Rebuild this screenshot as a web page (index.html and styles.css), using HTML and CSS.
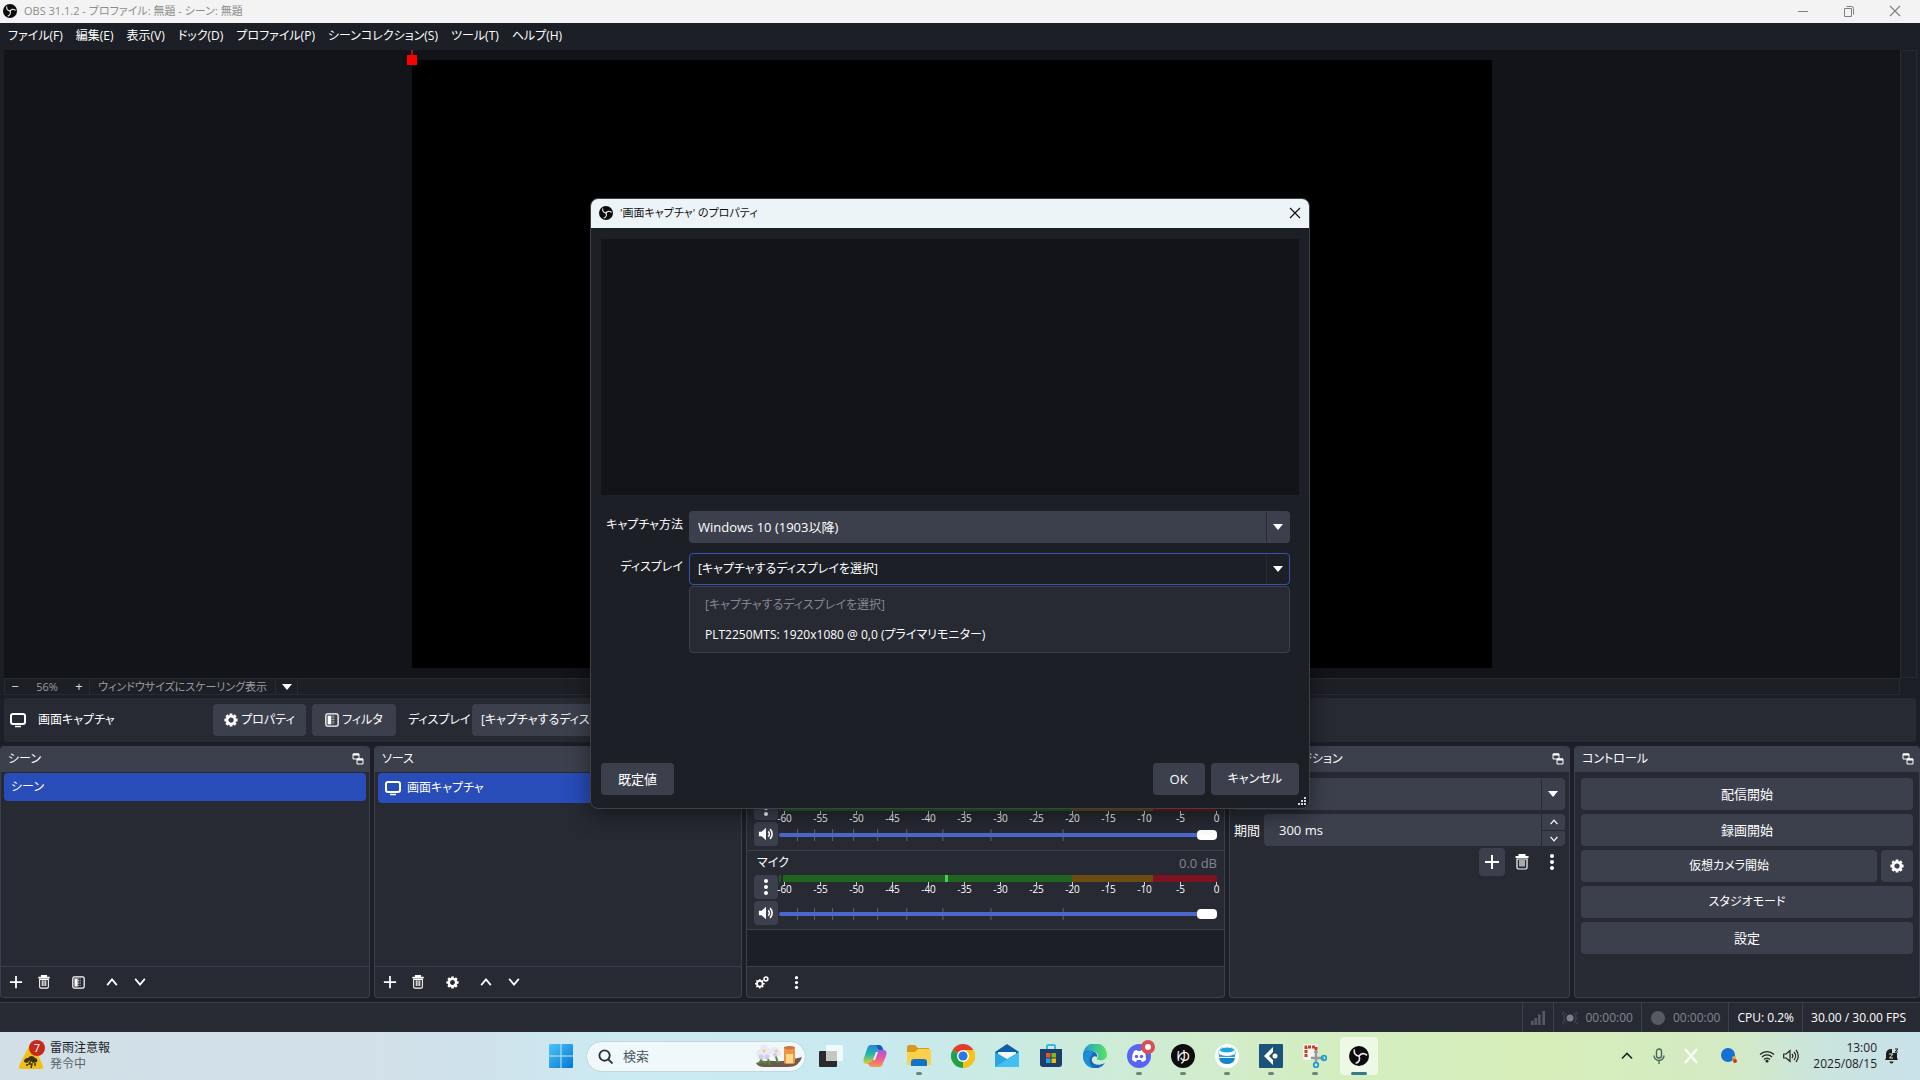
FILE: index.html
```html
<!DOCTYPE html>
<html lang="ja">
<head>
  <meta charset="UTF-8" />
  <meta name="viewport" content="width=device-width, initial-scale=1.0" />
  <title>OBS 31.1.2</title>
  <link rel="stylesheet" href="styles.css">
</head>
<body>

  <!-- Shared icons -->
  <svg class="sprite" aria-hidden="true">
    <symbol id="i-obs" viewBox="0 0 32 32">
      <circle cx="16" cy="16" r="16" fill="#0b0b0d"/>
      <g fill="none" stroke="#e8e8e8" stroke-width="2.600" stroke-linecap="round">
        <path d="M16 16C11 15.500 7.500 12 8.500 6.500"/>
        <path d="M16 16C11 15.500 7.500 12 8.500 6.500" transform="rotate(120 16 16)"/>
        <path d="M16 16C11 15.500 7.500 12 8.500 6.500" transform="rotate(240 16 16)"/>
      </g>
    </symbol>
    <symbol id="i-plus" viewBox="0 0 16 16"><path d="M8 1v14M1 8h14" stroke="currentColor" stroke-width="2" fill="none"/></symbol>
    <symbol id="i-trash" viewBox="0 0 16 16">
      <path d="M1.500 3h13M5.500 2.500V1h5v1.500" stroke="currentColor" stroke-width="2" fill="none"/>
      <path d="M3 5h10v8.500a1.500 1.500 0 0 1-1.500 1.500h-7A1.500 1.500 0 0 1 3 13.500zM6 6v6.500M8 6v6.500M10 6v6.500" stroke="currentColor" stroke-width="1.200" fill="none"/>
    </symbol>
    <symbol id="i-up" viewBox="0 0 16 16"><path d="M2.500 11.500L8 5l5.500 6.500" stroke="currentColor" stroke-width="2" fill="none"/></symbol>
    <symbol id="i-down" viewBox="0 0 16 16"><path d="M2.500 4.500L8 11l5.500-6.500" stroke="currentColor" stroke-width="2" fill="none"/></symbol>
    <symbol id="i-gear" viewBox="0 0 16 16">
      <circle cx="8" cy="8" r="4.500" fill="none" stroke="currentColor" stroke-width="3"/>
      <g stroke="currentColor" stroke-width="3.200">
        <path d="M8 .5v2.500M8 13v2.500M.5 8h2.500M13 8h2.500M2.700 2.700l1.800 1.800M11.500 11.500l1.800 1.800M13.300 2.700l-1.800 1.800M4.500 11.500l-1.800 1.800"/>
      </g>
    </symbol>
    <symbol id="i-filter" viewBox="0 0 16 16">
      <rect x="1" y="1" width="14" height="14" rx="2" fill="none" stroke="currentColor" stroke-width="1.500"/>
      <path d="M3 3h4v10H3z" fill="currentColor"/>
      <path d="M8 3v10M10 3v10" stroke="currentColor" stroke-dasharray="1 1"/>
    </symbol>
    <symbol id="i-kebab" viewBox="0 0 16 16" fill="currentColor"><circle cx="8" cy="2" r="2"/><circle cx="8" cy="8" r="2"/><circle cx="8" cy="14" r="2"/></symbol>
    <symbol id="i-monitor" viewBox="0 0 18 16">
      <rect x="2" y="2" width="14" height="10" rx="2" fill="none" stroke="currentColor" stroke-width="2"/>
      <path d="M6 14.500h6" stroke="currentColor" stroke-width="1.500"/>
    </symbol>
    <symbol id="i-float" viewBox="0 0 12 12">
      <path d="M1 1h6v5H1zM5 6h6v5H5z" fill="none" stroke="currentColor"/><path d="M1 1.500h6M5 6.500h6" stroke="currentColor" stroke-width="2"/>
    </symbol>
    <symbol id="i-speaker" viewBox="0 0 18 16">
      <path d="M1 5.500h3L9 1v14l-5-4.500H1z" fill="currentColor"/>
      <path d="M11.500 5a4 4 0 0 1 0 6M13.500 2.500a7.500 7.500 0 0 1 0 11" fill="none" stroke="currentColor" stroke-width="1.800"/>
    </symbol>
    <symbol id="i-close" viewBox="0 0 12 12"><path d="M1 1l10 10M11 1L1 11" stroke="currentColor" stroke-width="1.200"/></symbol>
    <symbol id="slider-ticks" viewBox="0 0 437 12" preserveAspectRatio="none">
      <path d="M18.500 0v12M35.500 0v12M53.500 0v12M74.500 0v12M98.500 0v12M127.500 0v12M163.500 0v12M211.500 0v12M283.500 0v12" stroke="#5b6273"/>
    </symbol>
  </svg>

  <!-- Title bar -->
  <header class="titlebar">
    <svg class="app-icon"><use href="#i-obs"/></svg>
    <span class="title">OBS 31.1.2 - プロファイル: 無題 - シーン: 無題</span>
    <div class="win-buttons">
      <button aria-label="最小化"><svg viewBox="0 0 12 12"><path d="M1 6.500h10" stroke="currentColor"/></svg></button>
      <button aria-label="元に戻す"><svg viewBox="0 0 12 12"><path d="M1.500 3.500h7v8h-7zM3.500 1.500h5a2 2 0 0 1 2 2v6" fill="none" stroke="currentColor"/></svg></button>
      <button aria-label="閉じる"><svg><use href="#i-close"/></svg></button>
    </div>
  </header>

  <nav class="menubar">
    <a href="#">ファイル(F)</a>
    <a href="#">編集(E)</a>
    <a href="#">表示(V)</a>
    <a href="#">ドック(D)</a>
    <a href="#">プロファイル(P)</a>
    <a href="#">シーンコレクション(S)</a>
    <a href="#">ツール(T)</a>
    <a href="#">ヘルプ(H)</a>
  </nav>

  <!-- Preview -->
  <main class="preview">
    <div class="preview-area">
      <div class="canvas"><span class="handle"></span></div>
    </div>
    <div class="preview-scroll"></div>
    <div class="zoombar">
      <button class="zoom-btn" aria-label="縮小">−</button>
      <span class="zoom-value">56%</span>
      <button class="zoom-btn" aria-label="拡大">+</button>
      <button class="scaling">ウィンドウサイズにスケーリング表示</button>
      <button class="scaling-arrow" aria-label="スケーリング"><i class="triangle"></i></button>
    </div>
  </main>

  <!-- Source context bar -->
  <section class="context">
    <svg class="ic-monitor"><use href="#i-monitor"/></svg>
    <span class="context-name">画面キャプチャ</span>
    <button class="btn btn-prop"><svg><use href="#i-gear"/></svg>プロパティ</button>
    <button class="btn btn-filter"><svg><use href="#i-filter"/></svg>フィルタ</button>
    <label for="context-display">ディスプレイ</label>
    <select id="context-display" class="combo"><option>[キャプチャするディスプレイを選択]</option></select>
  </section>

  <!-- Docks -->
  <section class="docks">
    <div class="dock">
      <h2>シーン<svg><use href="#i-float"/></svg></h2>
      <ul class="list">
        <li class="selected">シーン</li>
      </ul>
      <div class="toolbar">
        <button aria-label="追加"><svg><use href="#i-plus"/></svg></button>
        <button aria-label="削除"><svg><use href="#i-trash"/></svg></button>
        <button class="wide" aria-label="フィルタ"><svg class="small"><use href="#i-filter"/></svg></button>
        <button aria-label="上へ"><svg><use href="#i-up"/></svg></button>
        <button aria-label="下へ"><svg><use href="#i-down"/></svg></button>
      </div>
    </div>

    <div class="dock">
      <h2>ソース</h2>
      <ul class="list">
        <li class="selected source"><svg class="ic-monitor"><use href="#i-monitor"/></svg>画面キャプチャ</li>
      </ul>
      <div class="toolbar">
        <button aria-label="追加"><svg><use href="#i-plus"/></svg></button>
        <button aria-label="削除"><svg><use href="#i-trash"/></svg></button>
        <button class="wide" aria-label="プロパティ"><svg class="small"><use href="#i-gear"/></svg></button>
        <button aria-label="上へ"><svg><use href="#i-up"/></svg></button>
        <button aria-label="下へ"><svg><use href="#i-down"/></svg></button>
      </div>
    </div>

    <div class="dock mixer">
      <h2>音声ミキサー</h2>
      <div class="channel">
        <div class="channel-head"><span>デスクトップ音声</span><span class="db">0.0 dB</span></div>
        <div class="channel-row">
          <button class="mini" aria-label="メニュー"><svg><use href="#i-kebab"/></svg></button>
          <div class="meter">
            <div class="bar"></div>
            <div class="bar"></div>
            <div class="scale"><span>-60</span><span>-55</span><span>-50</span><span>-45</span><span>-40</span><span>-35</span><span>-30</span><span>-25</span><span>-20</span><span>-15</span><span>-10</span><span>-5</span><span>0</span></div>
          </div>
        </div>
        <div class="channel-row">
          <button class="mini" aria-label="ミュート"><svg class="speaker"><use href="#i-speaker"/></svg></button>
          <div class="fader"><svg><use href="#slider-ticks"/></svg><input type="range" min="0" max="100" value="100" aria-label="デスクトップ音声の音量"></div>
        </div>
      </div>
      <div class="channel">
        <div class="channel-head"><span>マイク</span><span class="db">0.0 dB</span></div>
        <div class="channel-row">
          <button class="mini" aria-label="メニュー"><svg><use href="#i-kebab"/></svg></button>
          <div class="meter">
            <div class="bar"><i class="peak"></i></div>
            <div class="scale"><span>-60</span><span>-55</span><span>-50</span><span>-45</span><span>-40</span><span>-35</span><span>-30</span><span>-25</span><span>-20</span><span>-15</span><span>-10</span><span>-5</span><span>0</span></div>
          </div>
        </div>
        <div class="channel-row">
          <button class="mini" aria-label="ミュート"><svg class="speaker"><use href="#i-speaker"/></svg></button>
          <div class="fader"><svg><use href="#slider-ticks"/></svg><input type="range" min="0" max="100" value="100" aria-label="マイクの音量"></div>
        </div>
      </div>
      <div class="mixer-empty"></div>
      <div class="toolbar">
        <button class="wide" aria-label="詳細設定">
          <svg viewBox="0 0 16 16" fill="none" stroke="currentColor">
            <circle cx="5.500" cy="10" r="3.200" stroke-width="2"/>
            <path d="M5.500 4.500v2M5.500 13.500v2M0 10h2M9 10h2M1.600 6.100L3 7.500M8 12.500l1.400 1.400M9.400 6.100L8 7.500M3 12.500l-1.400 1.400" stroke-width="1.800"/>
            <circle cx="12.500" cy="4.500" r="2.200" stroke-width="1.800"/>
          </svg>
        </button>
        <button aria-label="メニュー"><svg class="small"><use href="#i-kebab"/></svg></button>
      </div>
    </div>

    <div class="dock transitions">
      <h2>シーントランジション<svg><use href="#i-float"/></svg></h2>
      <div class="dock-body">
        <div class="combo-wrap">
          <select class="combo" aria-label="トランジション"><option>フェード</option></select>
          <i class="triangle"></i>
        </div>
        <div class="duration">
          <label for="duration">期間</label>
          <div class="spin">
            <input type="text" id="duration" value="300 ms">
            <div class="spin-buttons">
              <button aria-label="増やす"><svg><use href="#i-up"/></svg></button>
              <button aria-label="減らす"><svg><use href="#i-down"/></svg></button>
            </div>
          </div>
        </div>
        <div class="transition-tools">
          <button class="filled" aria-label="追加"><svg><use href="#i-plus"/></svg></button>
          <button aria-label="削除"><svg><use href="#i-trash"/></svg></button>
          <button aria-label="メニュー"><svg><use href="#i-kebab"/></svg></button>
        </div>
      </div>
    </div>

    <div class="dock controls">
      <h2>コントロール<svg><use href="#i-float"/></svg></h2>
      <div class="dock-body">
        <button class="btn">配信開始</button>
        <button class="btn">録画開始</button>
        <div class="control-row">
          <button class="btn kana">仮想カメラ開始</button>
          <button class="btn btn-gear" aria-label="仮想カメラ設定"><svg><use href="#i-gear"/></svg></button>
        </div>
        <button class="btn kana">スタジオモード</button>
        <button class="btn">設定</button>
      </div>
    </div>
  </section>

  <!-- Status bar -->
  <footer class="statusbar">
    <div class="stat"><svg class="signal" viewBox="0 0 16 16" fill="#565a66"><path d="M0 11h3v5H0zM4 8h3v8H4zM8 4h3v12H8zM13 0h3v16h-3z"/></svg></div>
    <div class="stat off">
      <svg viewBox="0 0 16 16"><circle cx="8" cy="8" r="3.500" fill="#7d808a"/><path d="M4 3a7 7 0 0 0 0 10M12 3a7 7 0 0 1 0 10M2 1.500a9 9 0 0 0 0 13M14 1.500a9 9 0 0 1 0 13" fill="none" stroke="#4b4f5a"/></svg>
      00:00:00
    </div>
    <div class="stat off"><svg viewBox="0 0 16 16"><circle cx="8" cy="8" r="7" fill="#565a63"/></svg>00:00:00</div>
    <div class="stat">CPU: 0.2%</div>
    <div class="stat">30.00 / 30.00 FPS</div>
  </footer>

  <!-- Windows taskbar -->
  <footer class="taskbar">
    <div class="weather">
      <svg viewBox="0 0 28 30">
        <path d="M12 4L1 26q-1 3 2 3h20q3 0 2-3L15 4q-1.500-2-3 0z" fill="#f0c019"/>
        <path d="M6 22a4 4 0 0 1 4-4 4 4 0 0 1 7 0 3 3 0 0 1 2 4l-4 1-3-3-3 3z" fill="#3a3212"/>
        <path d="M9 24v2M13 20l-2 4h3l-1 4M17 23v3" stroke="#3a3212" stroke-width="1.500" fill="none"/>
        <circle cx="19" cy="8" r="8" fill="#c42b1c"/>
        <text x="19" y="12" text-anchor="middle">7</text>
      </svg>
      <div><div class="weather-title">雷雨注意報</div><div class="weather-sub">発令中</div></div>
    </div>

    <div class="apps">
      <button class="app" aria-label="スタート">
        <svg viewBox="0 0 24 24"><defs><linearGradient id="win" x1="0" y1="0" x2="1" y2="1"><stop offset="0" stop-color="#4fc3f7"/><stop offset="1" stop-color="#0078d4"/></linearGradient></defs><path d="M1 0h10.500v11.500H0V1a1 1 0 0 1 1-1zM12.500 0H23a1 1 0 0 1 1 1v10.500H12.500zM0 12.500h11.500V24H1a1 1 0 0 1-1-1zM12.500 12.500H24V23a1 1 0 0 1-1 1H12.500z" fill="url(#win)"/></svg>
      </button>
      <div class="search">
        <svg class="lens" viewBox="0 0 16 16" fill="none" stroke="#2a3338" stroke-width="2"><circle cx="7" cy="7" r="5.500"/><path d="M11 11l4.500 4.500"/></svg>
        <input type="text" placeholder="検索" aria-label="検索">
        <svg class="art" viewBox="0 0 46 22">
          <path d="M0 18q8-3 18-2t28-4q-3 10-14 10H8q-6 0-8-4z" fill="#6d5a4c"/>
          <path d="M3 19l4-8M14 20l-3-9M22 18l-3-9M5 16l6 2" stroke="#5c8a3c" stroke-width="2"/>
          <g fill="#e9e8f8"><circle cx="4" cy="8" r="3.500"/><circle cx="12" cy="7" r="4"/><circle cx="8" cy="4" r="4"/><circle cx="7" cy="10" r="4.500"/><circle cx="19" cy="6" r="4"/><circle cx="22" cy="8" r="3"/></g>
          <g fill="#cfcdea"><circle cx="5" cy="12" r="2.500"/><circle cx="11" cy="12" r="2.500"/><circle cx="19" cy="10" r="2"/></g>
          <circle cx="8" cy="6" r="1.500" fill="#f2cf55"/><circle cx="20" cy="6" r="1.500" fill="#f2cf55"/>
          <rect x="28" y="2" width="11" height="17" rx="2" fill="#ef9445"/><path d="M30 9h7v9h-7z" fill="#ffd98c"/><path d="M28 3q5 3 11 0v-1q-5-2-11 0z" fill="#c47a42"/>
        </svg>
      </div>
      <button class="app" aria-label="タスクビュー"><svg viewBox="0 0 24 24"><rect y="7" width="18" height="16" rx="1" fill="#2b2b2b"/><rect x="7" y="1" width="17" height="16" rx="1" fill="#fff" opacity=".75"/><path d="M7 7h11v10H7z" fill="#c4c6c8"/></svg></button>
      <button class="app" aria-label="Copilot">
        <svg viewBox="0 0 24 24">
          <defs>
            <linearGradient id="cp1" x1="0" y1="0" x2="0" y2="1"><stop offset="0" stop-color="#2385e0"/><stop offset=".5" stop-color="#28b9a0"/><stop offset="1" stop-color="#e5cf2a"/></linearGradient>
            <linearGradient id="cp2" x1="0" y1="0" x2="0" y2="1"><stop offset="0" stop-color="#a55be0"/><stop offset=".5" stop-color="#ea5a96"/><stop offset="1" stop-color="#f79a4a"/></linearGradient>
          </defs>
          <path d="M8 1h7q3 0 4 4l-4 1-4 11q-1 3-4 3H4q-5 0-3-6l3-9q1-4 4-4z" fill="url(#cp1)"/>
          <path d="M13 1h3q3 0 4 4l1 2h-5z" fill="#1c5bbd"/>
          <path d="M16 23H9q-3 0-4-4l4-1 4-9q1-3 4-3h3q5 0 3 6l-3 7q-1 4-4 4z" fill="url(#cp2)"/>
          <path d="M10 16l3-8h2l-3 8z" fill="#e8f6fa"/>
        </svg>
      </button>
      <button class="app running" aria-label="エクスプローラー"><svg viewBox="0 0 24 24"><path d="M0 3a2 2 0 0 1 2-2h6l3 3h11v5H0z" fill="#d79b17"/><path d="M0 8h8l3-3h11a2 2 0 0 1 2 2v14H0z" fill="#fccf4d"/><path d="M4 22v-4a3 3 0 0 1 3-3h10a3 3 0 0 1 3 3v4z" fill="#1173c7"/></svg></button>
      <button class="app" aria-label="Chrome">
        <svg viewBox="0 0 24 24"><path d="M12 12L1.600 6A12 12 0 0 1 22.400 6z" fill="#e33b2e"/><path d="M12 12L22.400 6A12 12 0 0 1 12 24z" fill="#fbc116"/><path d="M12 12v12A12 12 0 0 1 1.600 6z" fill="#24a148"/><path d="M12 6h10.400A12 12 0 0 1 12 24l5.500-9z" fill="#fbc116"/><circle cx="12" cy="12" r="6" fill="#fff"/><circle cx="12" cy="12" r="4.600" fill="#2e76e6"/></svg>
      </button>
      <button class="app" aria-label="メール"><svg viewBox="0 0 24 24"><path d="M0 8l12-8 12 8v3H0z" fill="#0f5fa8"/><path d="M3 8h18v8H3z" fill="#f2f9fd"/><path d="M0 8l12 7L24 8v15H0z" fill="#2ba5e0"/><path d="M24 8L0 23h24z" fill="#42c0f0"/></svg></button>
      <button class="app" aria-label="ストア"><svg viewBox="0 0 24 24"><path d="M8 6V2q0-1 1-1h6q1 0 1 1v4" fill="none" stroke="#39b9e8" stroke-width="2"/><path d="M1 5h22v15a3 3 0 0 1-3 3H4a3 3 0 0 1-3-3z" fill="#1b3e6b"/><path d="M7 9h4.500v4.500H7z" fill="#f05125"/><path d="M12.500 9H17v4.500h-4.500z" fill="#80bb0a"/><path d="M7 14.500h4.500V19H7z" fill="#20a4ee"/><path d="M12.500 14.500H17V19h-4.500z" fill="#fcb900"/></svg></button>
      <button class="app" aria-label="Edge">
        <svg viewBox="0 0 24 24"><defs><linearGradient id="edge" x1="0" y1="0" x2="1" y2="0"><stop offset="0" stop-color="#1f9bdc"/><stop offset="1" stop-color="#5be35c"/></linearGradient></defs><path d="M0 11A12 12 0 0 1 24 11c0 4-4 6-8 5-2 0-3-1-1-3 1-4-3-6-6-6-5 0-8 2-9 4z" fill="url(#edge)"/><path d="M0 12c0-4 4-6 8-5 4 0 7 3 6 6-3-2-6 1-5 4 1 4 7 5 13 2A12 12 0 0 1 0 12z" fill="#1668b8"/><path d="M8 12c-3 3-2 9 4 12C5 24 0 18 0 12c1-4 5-5 8-5 2 1 3 2 0 5z" fill="#1d8fd6"/></svg>
      </button>
      <button class="app running" aria-label="Discord">
        <svg viewBox="0 0 24 24" class="over"><circle cx="12" cy="12" r="12" fill="#5865f2"/><path d="M7 7q2-1 3-1l.5 1h3l.5-1q1 0 3 1 2.500 4 2 9-2 1.500-4 2l-1-2h-4l-1 2q-2-.5-4-2-.5-5 2-9z" fill="#fff"/><circle cx="9.500" cy="12.500" r="1.700" fill="#5865f2"/><circle cx="14.500" cy="12.500" r="1.700" fill="#5865f2"/><circle cx="21" cy="3" r="7" fill="#d94f55"/><circle cx="21" cy="3" r="3" fill="#fff"/></svg>
      </button>
      <button class="app running" aria-label="ゆ"><span class="round-yu">ゆ</span></button>
      <button class="app running" aria-label="同期"><svg viewBox="0 0 24 24"><circle cx="12" cy="12" r="12" fill="#fff"/><ellipse cx="12" cy="6" rx="7" ry="2.500" fill="#1fa5dd"/><path d="M4 10q8 4 16 0v3H4z" fill="#1fa5dd"/><path d="M4 14h16q-1 6-8 6t-8-6z" fill="#1288cb"/><path d="M4 11q-2-5 4-8M20 11q2-5-4-8" fill="none" stroke="#8fd5f0"/></svg></button>
      <button class="app running" aria-label="キャプチャ"><svg viewBox="0 0 24 24"><rect width="24" height="24" rx="1" fill="#1c5379"/><path d="M14 3L5 12l9 9v-5l-4-4 4-4z" fill="#fff"/><circle cx="16" cy="12" r="2.500" fill="#fff"/></svg></button>
      <button class="app running" aria-label="Snipping Tool"><svg viewBox="0 0 24 24"><rect x="0" y="0" width="15" height="16" rx="2" fill="#f3f3f1"/><path d="M3 13V3h10v6" fill="none" stroke="#c8411d" stroke-width="3" stroke-dasharray="3 1"/><path d="M13 6v13M8 14h13" stroke="#8e9aa0" stroke-width="2.500"/><circle cx="21" cy="14" r="2.300" fill="none" stroke="#1d9bd8" stroke-width="1.800"/><circle cx="13" cy="21" r="2.300" fill="none" stroke="#1d9bd8" stroke-width="1.800"/></svg></button>
      <button class="app running active" aria-label="OBS"><svg class="obs"><use href="#i-obs"/></svg></button>
    </div>

    <div class="tray">
      <button aria-label="隠れているインジケーター"><svg viewBox="0 0 16 16"><path d="M3 10.500L8 5.500l5 5" fill="none" stroke="#222" stroke-width="1.600"/></svg></button>
      <button aria-label="マイク"><svg viewBox="0 0 16 16" fill="none" stroke="#4b6a55" stroke-width="1.400"><rect x="5.500" y="1" width="5" height="9" rx="2.500"/><path d="M3 7.500a5 5 0 0 0 10 0M8 12.500V16"/></svg></button>
      <button aria-label="X"><svg viewBox="0 0 16 16"><path d="M2 1l12 14M14 1L2 15" stroke="#fff" stroke-width="2"/></svg></button>
      <button class="tray-blue" aria-label="アプリ"><svg viewBox="0 0 16 16"><circle cx="7" cy="7" r="7" fill="#1671d4"/><circle cx="13" cy="10" r="2" fill="#e8a33a"/><circle cx="14" cy="13" r="2" fill="#c0392b"/></svg></button>
      <button class="tray-net" aria-label="ネットワークと音量">
        <svg viewBox="0 0 16 16" fill="none" stroke="#222" stroke-width="1.200"><path d="M1 6.500a10 10 0 0 1 14 0M3 9a7 7 0 0 1 10 0M5 11.500a4 4 0 0 1 6 0"/><circle cx="8" cy="13" r="1" fill="#222"/></svg>
        <svg viewBox="0 0 16 16" fill="none" stroke="#222" stroke-width="1.200"><path d="M.7 6h2.500L7 2.500v11L3.200 10H.7zM9 6a3 3 0 0 1 0 4M11 4a6 6 0 0 1 0 8M13 2a9 9 0 0 1 0 12"/></svg>
      </button>
      <div class="clock">13:00<br>2025/08/15</div>
      <button aria-label="通知"><svg viewBox="0 0 16 16" fill="#1c1c1c"><path d="M1 12l1-2V6a5 5 0 0 1 6-5v4h5v5l1 2z"/><path d="M5.500 13.500h4a2 2 0 0 1-4 0z"/><path d="M5 6h4L5.500 10H9" fill="none" stroke="#d5e3e6"/><path d="M11 1h3l-3 3h3" fill="none" stroke="#1c1c1c"/></svg></button>
    </div>
  </footer>

  <!-- Properties dialog -->
  <div class="dialog" role="dialog" aria-labelledby="dialog-title">
    <div class="dialog-title">
      <svg class="app-icon"><use href="#i-obs"/></svg>
      <span id="dialog-title">'画面キャプチャ' のプロパティ</span>
      <button aria-label="閉じる"><svg><use href="#i-close"/></svg></button>
    </div>
    <div class="dialog-body">
      <div class="dialog-preview"></div>
      <div class="form">
        <label for="method">キャプチャ方法</label>
        <div class="combo-wrap">
          <select id="method" class="combo"><option>Windows 10 (1903以降)</option></select>
          <i class="triangle"></i>
        </div>
        <label for="display">ディスプレイ</label>
        <div class="combo-wrap open">
          <select id="display" class="combo"><option>[キャプチャするディスプレイを選択]</option></select>
          <i class="triangle"></i>
          <ul class="popup">
            <li class="disabled">[キャプチャするディスプレイを選択]</li>
            <li>PLT2250MTS: 1920x1080 @ 0,0 (プライマリモニター)</li>
          </ul>
        </div>
      </div>
      <div class="dialog-buttons">
        <button class="btn">既定値</button>
        <button class="btn ok">OK</button>
        <button class="btn kana">キャンセル</button>
      </div>
    </div>
    <svg class="grip" viewBox="0 0 9 9" fill="#d8d8d8"><path d="M6 0h2v2H6zM3 3h2v2H3zM6 3h2v2H6zM0 6h2v2H0zM3 6h2v2H3zM6 6h2v2H6z"/></svg>
  </div>

</body>
</html>
```
FILE: styles.css
```css
/* Global */
* {
  margin: 0;
  padding: 0;
  box-sizing: border-box;
}

body {
  position: relative;
  display: flex;
  flex-direction: column;
  min-height: 100vh;
  background: #1d1f26;
  color: #fff;
  font-family: "Open Sans", "Noto Sans CJK JP", sans-serif;
  font-size: 13px;
  line-height: 18px;
  font-feature-settings: "palt";
  white-space: nowrap;
  overflow: hidden;
}

button,
input,
select {
  font: inherit;
  font-feature-settings: inherit;
  color: inherit;
  background: none;
  border: none;
  outline: none;
  appearance: none;
}

a {
  color: inherit;
  text-decoration: none;
}

ul {
  list-style: none;
}

svg {
  display: block;
  flex: none;
}

.sprite {
  position: absolute;
  width: 0;
  height: 0;
}

.triangle {
  border: 5px solid transparent;
  border-top: 6px solid #fff;
  border-bottom: none;
}

.ic-monitor {
  width: 18px;
  height: 16px;
}

/* Title bar */
.titlebar {
  display: flex;
  align-items: center;
  height: 23px;
  padding: 0 2px 1px 3px;
  background: #f3f3f3;
  color: #8c8c8c;
  font-size: 11px;
}

.app-icon {
  width: 14px;
  height: 14px;
}

.title {
  margin-left: 7px;
}

.win-buttons {
  display: flex;
  margin-left: auto;
}

.win-buttons button {
  display: grid;
  place-items: center;
  width: 46px;
  height: 20px;
  color: #808080;
}

.win-buttons svg {
  width: 12px;
  height: 12px;
}

/* Menu */
.menubar {
  display: flex;
  gap: 13px;
  height: 27px;
  padding: 4px 8px;
  font-size: 12px;
}

/* Preview */
.preview {
  flex: 1;
  display: grid;
  grid-template-columns: 1fr 17px;
  grid-template-rows: 1fr 17px;
  min-height: 0;
  padding: 0 3px 3px 4px;
}

.preview-area {
  display: flex;
  justify-content: center;
  min-height: 0;
  padding: 10px;
  background: #13141a;
}

.canvas {
  position: relative;
  height: 100%;
  aspect-ratio: 16 / 9;
  background: #000;
}

.handle {
  position: absolute;
  top: -5px;
  left: -5px;
  width: 10px;
  height: 10px;
  background: #f00;
}

.handle::before {
  content: "";
  position: absolute;
  left: 4px;
  bottom: 10px;
  width: 2px;
  height: 5px;
  background: #a3161c;
}

.preview-scroll {
  border: 1px solid #272a33;
}

.zoombar {
  display: flex;
  align-items: center;
  border: 1px solid #272a33;
  color: #9a9ca3;
  font-size: 11px;
  line-height: 15px;
}

.zoom-btn {
  width: 20px;
  color: #ddd;
  font-size: 13px;
}

.zoom-value {
  width: 44px;
  text-align: center;
}

.scaling {
  padding: 0 8px;
  border-left: 1px solid #272a33;
  border-right: 1px solid #272a33;
}

.scaling-arrow {
  display: grid;
  place-items: center;
  width: 22px;
  height: 15px;
  border-right: 1px solid #272a33;
}

/* Buttons and combo boxes */
.btn {
  display: flex;
  flex: none;
  align-items: center;
  justify-content: center;
  height: 32px;
  padding: 0 14px;
  border-radius: 4px;
  background: #3c404d;
}

.btn svg {
  width: 14px;
  height: 14px;
  margin-right: 3px;
}

.kana {
  font-size: 12px;
}

.combo {
  width: 100%;
  height: 32px;
  padding: 0 9px;
  border-radius: 4px;
  background: #3c404d;
}

.combo-wrap {
  position: relative;
}

.combo-wrap > .triangle {
  position: absolute;
  top: 13px;
  right: 7px;
}

.combo-wrap::after {
  content: "";
  position: absolute;
  top: 1px;
  bottom: 1px;
  right: 23px;
  width: 1px;
  background: #272a33;
}

/* Context bar */
.context {
  display: flex;
  align-items: center;
  height: 44px;
  margin: 0 4px 4px;
  padding: 0 5px;
  border-radius: 4px;
  background: #272a33;
  font-size: 12px;
}

.context-name {
  flex: none;
  width: 186px;
  padding-left: 11px;
}

.context .btn {
  padding: 0;
}

.btn-prop {
  width: 93px;
  margin-right: 6px;
}

.btn-filter {
  width: 84px;
}

.context label {
  flex: none;
  width: 76px;
  padding-left: 12px;
}

.context .combo {
  width: 500px;
}

/* Docks */
.docks {
  display: grid;
  grid-template-columns: 370fr 368fr 479fr 341fr 346fr;
  gap: 4px;
  min-height: 252px;
  margin-bottom: 4px;
}

.dock {
  display: flex;
  flex-direction: column;
  min-width: 0;
  border: 1px solid #3c404d;
  border-top: none;
  border-radius: 4px;
  background: #272a33;
}

.dock h2 {
  display: flex;
  align-items: center;
  justify-content: space-between;
  height: 26px;
  padding: 0 5px 0 7px;
  border-radius: 4px 4px 0 0;
  background: #3c404d;
  font-size: 12px;
  font-weight: normal;
}

.dock h2 svg {
  width: 12px;
  height: 12px;
}

.list {
  flex: 1;
  padding: 1px 3px;
  font-size: 12px;
}

.list li {
  display: flex;
  align-items: center;
  height: 28px;
  padding: 0 7px;
  border-radius: 4px;
}

.list .selected {
  background: #284cb8;
}

.list .source {
  height: 30px;
  padding: 0 6px;
  gap: 5px;
}

.toolbar {
  display: flex;
  align-items: center;
  height: 31px;
  padding-left: 1px;
  border-top: 1px solid #3c404d;
}

.toolbar button {
  display: grid;
  place-items: center;
  width: 28px;
  height: 28px;
}

.toolbar .wide {
  width: 40px;
}

.toolbar svg {
  width: 14px;
  height: 14px;
}

.toolbar .small {
  width: 13px;
  height: 13px;
}

/* Mixer */
.mixer .toolbar {
  padding-left: 2px;
}

.mixer .toolbar .wide {
  width: 26px;
  margin-right: 7px;
}

.channel {
  height: 79px;
  padding: 3px 7px 0;
  border-bottom: 1px solid #3c404d;
}

.channel-head {
  display: flex;
  justify-content: space-between;
  height: 21px;
  padding-left: 3px;
  font-size: 12px;
}

.db {
  color: #83868e;
  font-size: 13px;
}

.channel-row {
  display: flex;
  gap: 1px;
  height: 26px;
}

.mini {
  display: grid;
  place-items: center;
  width: 24px;
  height: 24px;
  border-radius: 4px;
  background: #3c404d;
}

.mini svg {
  width: 16px;
  height: 16px;
}

.meter {
  flex: 1;
}

.bar {
  position: relative;
  height: 7px;
  margin-bottom: 1px;
  background: linear-gradient(to right, #1b5e20 2px, #272a33 2px 4px, #1f641f 4px 67%, #6b4d14 67% 85.500%, #7d1220 85.500%);
}

.peak {
  position: absolute;
  left: 38%;
  width: 3px;
  height: 7px;
  background: #4ccc57;
}

.scale {
  display: flex;
  justify-content: space-between;
  padding-left: 5px;
  font-size: 10px;
  line-height: 12px;
}

.scale span {
  position: relative;
  display: flex;
  justify-content: center;
  width: 1px;
}

.scale span::before {
  content: "";
  position: absolute;
  top: -1px;
  width: 1px;
  height: 4px;
  background: #d0d0d0;
}

.fader {
  position: relative;
  flex: 1;
}

.fader svg {
  position: absolute;
  top: 7px;
  width: 100%;
  height: 12px;
}

.fader input {
  position: relative;
  display: block;
  width: 100%;
  height: 26px;
}

.fader input::-webkit-slider-runnable-track {
  height: 4px;
  border-radius: 2px;
  background: #4b68cc;
}

.fader input::-webkit-slider-thumb {
  appearance: none;
  width: 20px;
  height: 10px;
  margin-top: -3px;
  border-radius: 4px;
  background: #fff;
}

.mixer-empty {
  flex: 1;
  background: #1d1f26;
}

/* Transitions and controls */
.dock-body {
  display: flex;
  flex-direction: column;
  gap: 4px;
  padding: 6px;
}

.transitions .dock-body {
  padding: 6px 4px;
}

.duration {
  display: flex;
  align-items: center;
}

.duration label {
  width: 30px;
}

.spin {
  flex: 1;
  display: flex;
  height: 32px;
  border-radius: 4px;
  background: #3c404d;
}

.spin input {
  flex: 1;
  min-width: 0;
  padding-left: 15px;
}

.spin-buttons {
  width: 24px;
  border-left: 1px solid #272a33;
}

.spin-buttons button {
  display: grid;
  place-items: center;
  width: 100%;
  height: 16px;
}

.spin-buttons button + button {
  border-top: 1px solid #272a33;
}

.spin-buttons svg {
  width: 10px;
  height: 10px;
}

.transition-tools {
  display: flex;
  justify-content: flex-end;
  gap: 4px;
  margin-top: -2px;
}

.transition-tools button {
  display: grid;
  place-items: center;
  width: 26px;
  height: 28px;
  border-radius: 4px;
}

.transition-tools .filled {
  background: #3c404d;
}

.transition-tools svg {
  width: 16px;
  height: 16px;
}

.control-row {
  display: flex;
  gap: 4px;
}

.control-row .btn:first-child {
  flex: 1;
}

.control-row .btn-gear {
  width: 32px;
  padding: 0;
}

.btn-gear svg {
  margin: 0;
}

/* Status bar */
.statusbar {
  display: flex;
  justify-content: flex-end;
  height: 30px;
  padding-right: 6px;
  border-top: 1px solid #3c404d;
  background: #272a33;
  font-size: 12px;
}

.stat {
  display: flex;
  align-items: center;
  gap: 7px;
  padding: 0 8px;
  border-left: 1px solid #3c404d;
}

.stat svg {
  width: 16px;
  height: 16px;
}

.stat .signal {
  width: 14px;
  height: 14px;
}

.off {
  color: #83868e;
}

/* Taskbar */
.taskbar {
  display: grid;
  grid-template-columns: 1fr auto 1fr;
  align-items: center;
  height: 48px;
  background: linear-gradient(to right, #d2dfe7 0%, #d2e1ea 20%, #cfe2ec 25%, #cbebf2 33%, #c8e9f0 45%, #ccebdc 56%, #d2edc4 66%, #d7eeb9 80%, #d3eac4 90%, #cae4df 95%, #c9e1ea 100%);
  color: #1c2226;
}

.weather {
  display: flex;
  gap: 4px;
  padding-left: 18px;
  font-size: 12px;
  line-height: 16px;
}

.weather svg {
  width: 28px;
  height: 30px;
}

.weather text {
  fill: #fff;
  font-size: 11px;
}

.weather-sub {
  color: #5b666d;
}

.apps {
  display: flex;
  align-items: center;
  gap: 6px;
  height: 48px;
}

.app {
  position: relative;
  display: grid;
  place-items: center;
  width: 38px;
  height: 38px;
}

.app svg {
  width: 24px;
  height: 24px;
}

.app .over {
  overflow: visible;
}

.app .obs {
  width: 20px;
  height: 20px;
}

.running::after {
  content: "";
  position: absolute;
  bottom: 0;
  left: 16px;
  width: 6px;
  height: 3px;
  border-radius: 2px;
  background: #6c8578;
}

.active {
  border-radius: 4px;
  background: rgba(255, 255, 255, 0.6);
}

.active::after {
  left: 11px;
  width: 16px;
  background: #357c87;
}

.round-yu {
  width: 24px;
  height: 24px;
  border-radius: 50%;
  background: #0d0d0d;
  color: #fff;
  font-size: 15px;
  line-height: 24px;
  text-align: center;
}

.search {
  display: flex;
  align-items: center;
  width: 220px;
  height: 31px;
  padding: 0 3px 0 11px;
  border: 1px solid #c3d6de;
  border-radius: 16px;
  background: #f0f8fc;
}

.lens {
  width: 15px;
  height: 15px;
}

.search input {
  flex: 1;
  min-width: 0;
  padding-left: 10px;
}

.search input::placeholder {
  color: #4d585e;
}

.art {
  width: 46px;
  height: 22px;
}

.tray {
  display: flex;
  align-items: center;
  justify-content: flex-end;
  padding-right: 20px;
  font-size: 12px;
  line-height: 16px;
}

.tray button {
  display: flex;
  justify-content: center;
  width: 32px;
}

.tray svg {
  width: 16px;
  height: 16px;
}

.tray .tray-blue {
  width: 44px;
}

.tray .tray-net {
  gap: 8px;
  width: 56px;
}

.clock {
  width: 70px;
  text-align: right;
}

.tray .clock + button {
  width: 16px;
  margin-left: 7px;
}

/* Properties dialog */
.dialog {
  position: absolute;
  top: 198px;
  left: calc(50% - 370px);
  display: flex;
  flex-direction: column;
  width: 720px;
  height: 611px;
  border: 1px solid #3f4147;
  border-radius: 8px;
  background: #1d1f26;
  box-shadow: 0 6px 22px rgba(0, 0, 0, 0.45);
}

.dialog-title {
  display: flex;
  align-items: center;
  height: 29px;
  padding: 0 8px 2px;
  border-radius: 7px 7px 0 0;
  background: #edf4f8;
  color: #111;
  font-size: 11px;
}

.dialog-title span {
  margin-left: 7px;
}

.dialog-title button {
  margin-left: auto;
}

.dialog-title button svg {
  width: 12px;
  height: 12px;
}

.dialog-body {
  flex: 1;
  display: flex;
  flex-direction: column;
  padding: 11px 10px 13px;
}

.dialog-preview {
  height: 256px;
  background: #13141a;
}

.form {
  display: grid;
  grid-template-columns: 82px 1fr;
  column-gap: 6px;
  row-gap: 10px;
  padding: 16px 9px 0 0;
}

.form label {
  padding-top: 5px;
  font-size: 12px;
  text-align: right;
}

.form .open .combo {
  border: 1px solid #3553b0;
  padding: 0 8px;
  background: #1d1f26;
  font-size: 12px;
}

.popup {
  position: absolute;
  top: 33px;
  left: 0;
  right: 0;
  padding: 3px 15px 2px;
  border: 1px solid #3c404d;
  border-radius: 4px;
  background: #272a33;
  font-size: 12px;
  line-height: 30px;
}

.popup .disabled {
  color: #85878e;
}

.dialog-buttons {
  display: flex;
  gap: 6px;
  margin-top: auto;
}

.dialog-buttons .btn {
  padding: 0 17px;
}

.dialog-buttons .ok {
  margin-left: auto;
}

.grip {
  position: absolute;
  right: 2px;
  bottom: 2px;
  width: 9px;
  height: 9px;
}
```
